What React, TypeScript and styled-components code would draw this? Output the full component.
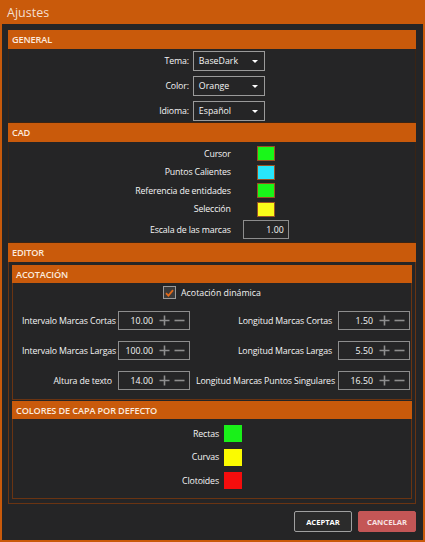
import React from "react";
import styled, { createGlobalStyle } from "styled-components";

const ORANGE = "#C95A0B";
const FRAME = "#6a3412";
const FONT = `"Open Sans", "Lato", sans-serif`;

const Global = createGlobalStyle`
  html, body { margin: 0; padding: 0; background: #252526; }
  body { font-family: ${FONT}; }
  * { box-sizing: border-box; }
`;

const Window = styled.div`
  width: 425px;
  height: 542px;
  display: flex;
  flex-direction: column;
  background: #252526;
  border: 2px solid ${ORANGE};
  border-top: none;
`;

const TitleBar = styled.div`
  height: 24px;
  flex: none;
  background: ${ORANGE};
  color: #f4dfd0;
  font-size: 12.5px;
  display: flex;
  align-items: center;
  margin: 0 -2px;
  padding-left: 7px;
`;

const Content = styled.div`
  flex: 1;
  display: flex;
  flex-direction: column;
  padding: 6px 7px 0 6px;
`;

const Header = styled.div<{ $nested?: boolean }>`
  height: ${(p) => (p.$nested ? 18 : 19)}px;
  background: ${ORANGE};
  color: #fbeadf;
  font-size: 9.2px;
  font-weight: 600;
  display: flex;
  align-items: center;
  padding-left: 4px;
  letter-spacing: -0.15px;
`;

const Body = styled.div<{ $pt: number; $pb: number; $px?: number; $frame?: string }>`
  border: 1px solid ${(p) => p.$frame ?? FRAME};
  border-top: none;
  padding: ${(p) => p.$pt}px ${(p) => p.$px ?? 0}px ${(p) => p.$pb}px;
`;

const Label = styled.span`
  color: #f4f4f4;
  font-size: 8.8px;
  letter-spacing: -0.15px;
  text-align: right;
  white-space: nowrap;
`;

const FormGrid = styled.div<{ $col: number; $gap: number; $rowGap: number }>`
  display: grid;
  grid-template-columns: auto ${(p) => p.$col}px;
  column-gap: ${(p) => p.$gap}px;
  row-gap: ${(p) => p.$rowGap}px;
  justify-content: center;
  align-items: center;
`;

const SelectBox = styled.div`
  height: 20px;
  border: 1px solid #9a9a9a;
  display: flex;
  align-items: center;
  justify-content: space-between;
  padding: 0 6px 0 5px;
  color: #f5f5f5;
  font-size: 8.8px;
`;

const Arrow = styled.span`
  width: 0;
  height: 0;
  border-left: 3px solid transparent;
  border-right: 3px solid transparent;
  border-top: 3px solid #ffffff;
`;

const Swatch = styled.div<{ $color: string; $h: number; $framed?: boolean }>`
  width: 18px;
  height: ${(p) => p.$h}px;
  background: ${(p) => p.$color};
  border: ${(p) => (p.$framed ? "1px solid #9a5224" : "none")};
  justify-self: center;
`;

const ValueBox = styled.div<{ $w: number }>`
  width: ${(p) => p.$w}px;
  height: 19px;
  border: 1px solid #8d8d8d;
  display: flex;
  align-items: center;
  justify-content: flex-end;
  padding-right: 4px;
  color: #f5f5f5;
  font-size: 8.8px;
`;

const Value = styled.span`
  margin-right: 6px;
`;

const StepIcon = styled.svg`
  display: block;
  flex: none;
`;

const Plus = () => (
  <StepIcon width="11" height="11" viewBox="0 0 11 11" style={{ marginRight: 4 }}>
    <path d="M5.5 0.5v10M0.5 5.5h10" stroke="#8e8e8e" strokeWidth="1.6" />
  </StepIcon>
);
const Minus = () => (
  <StepIcon width="11" height="11" viewBox="0 0 11 11">
    <path d="M0.5 5.5h10" stroke="#8e8e8e" strokeWidth="1.6" />
  </StepIcon>
);

const Stack = styled.div<{ $gap: number }>`
  display: flex;
  flex-direction: column;
  gap: ${(p) => p.$gap}px;
`;

const CheckRow = styled.label`
  display: flex;
  justify-content: center;
  align-items: center;
  gap: 5px;
  color: #f2f2f2;
  font-size: 8.8px;
  height: 13px;
`;

const CheckBox = styled.span`
  width: 13px;
  height: 13px;
  border: 1px solid #9a9a9a;
  background: #3a3a3a;
  display: flex;
  align-items: center;
  justify-content: center;
`;

const DimGrid = styled.div`
  display: grid;
  grid-template-columns: 90px 72px 136px 72px;
  column-gap: 6px;
  row-gap: 11px;
  align-items: center;
  padding-left: 9px;
  margin-top: 12px;
`;

const Footer = styled.div`
  display: flex;
  justify-content: flex-end;
  gap: 6px;
  margin-top: 7px;
`;

const Button = styled.button<{ $danger?: boolean }>`
  width: 58px;
  height: 21px;
  border-radius: 2px;
  border: 1px solid ${(p) => (p.$danger ? "#c45656" : "#a0a0a0")};
  background: ${(p) => (p.$danger ? "#c45656" : "#2b2b2b")};
  color: ${(p) => (p.$danger ? "#f7e4e4" : "#ffffff")};
  font-family: ${FONT};
  font-size: 7.6px;
  font-weight: 700;
  padding: 0;
  cursor: pointer;
`;

const NumberField = ({ value }: { value: string }) => (
  <ValueBox $w={72}>
    <Value>{value}</Value>
    <Plus />
    <Minus />
  </ValueBox>
);

const dims: [string, string, string, string][] = [
  ["Intervalo Marcas Cortas", "10.00", "Longitud Marcas Cortas", "1.50"],
  ["Intervalo Marcas Largas", "100.00", "Longitud Marcas Largas", "5.50"],
  ["Altura de texto", "14.00", "Longitud Marcas Puntos Singulares", "16.50"],
];

export default function App() {
  return (
    <>
      <Global />
      <Window>
        <TitleBar>Ajustes</TitleBar>
        <Content>
          <Header>GENERAL</Header>
          <Body $pt={2} $pb={1} $frame="#3a2414">
            <FormGrid $col={72} $gap={4} $rowGap={5}>
              <Label>Tema:</Label>
              <SelectBox>
                BaseDark
                <Arrow />
              </SelectBox>
              <Label>Color:</Label>
              <SelectBox>
                Orange
                <Arrow />
              </SelectBox>
              <Label>Idioma:</Label>
              <SelectBox>
                Español
                <Arrow />
              </SelectBox>
            </FormGrid>
          </Body>

          <Header>CAD</Header>
          <Body $pt={4} $pb={3} $frame="#3a2414">
            <FormGrid $col={46} $gap={12} $rowGap={3.5}>
              <Label>Cursor</Label>
              <Swatch $color="#19f719" $h={15} $framed />
              <Label>Puntos Calientes</Label>
              <Swatch $color="#28e6fb" $h={15} $framed />
              <Label>Referencia de entidades</Label>
              <Swatch $color="#19f719" $h={15} $framed />
              <Label>Selección</Label>
              <Swatch $color="#fbfb19" $h={15} $framed />
              <Label>Escala de las marcas</Label>
              <ValueBox $w={46}>1.00</ValueBox>
            </FormGrid>
          </Body>

          <Header>EDITOR</Header>
          <Body $pt={3} $pb={4} $px={3}>
            <Stack $gap={1}>
              <div>
                <Header $nested>ACOTACIÓN</Header>
                <Body $pt={3} $pb={9}>
                  <CheckRow>
                    <CheckBox>
                      <svg width="9" height="8" viewBox="0 0 9 8">
                        <path d="M1 4.2l2.4 2.4L8 1.2" fill="none" stroke="#e0691a" strokeWidth="1.8" />
                      </svg>
                    </CheckBox>
                    Acotación dinámica
                  </CheckRow>
                  <DimGrid>
                    {dims.map(([l1, v1, l2, v2]) => (
                      <React.Fragment key={l1}>
                        <Label>{l1}</Label>
                        <NumberField value={v1} />
                        <Label>{l2}</Label>
                        <NumberField value={v2} />
                      </React.Fragment>
                    ))}
                  </DimGrid>
                </Body>
              </div>
              <div>
                <Header $nested>COLORES DE CAPA POR DEFECTO</Header>
                <Body $pt={6} $pb={9}>
                  <FormGrid $col={18} $gap={5} $rowGap={6.5}>
                    <Label>Rectas</Label>
                    <Swatch $color="#19f019" $h={17} />
                    <Label>Curvas</Label>
                    <Swatch $color="#fbfb00" $h={17} />
                    <Label>Clotoides</Label>
                    <Swatch $color="#f50d0d" $h={17} />
                  </FormGrid>
                </Body>
              </div>
            </Stack>
          </Body>

          <Footer>
            <Button>ACEPTAR</Button>
            <Button $danger>CANCELAR</Button>
          </Footer>
        </Content>
      </Window>
    </>
  );
}
